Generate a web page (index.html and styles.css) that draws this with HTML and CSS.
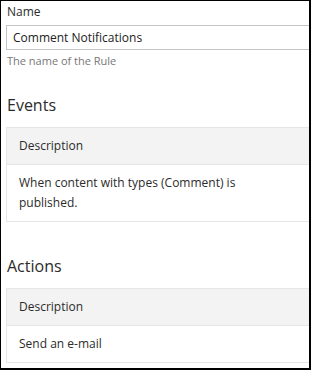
FILE: index.html
```html
<!doctype html>
<html>
  <head>
    <meta charset="utf-8">
    <title>Edit Rule</title>
    <link rel="stylesheet" href="styles.css">
  </head>

  <body>
    <div class="frame">
      <div class="page">

        <div class="field">
          <label class="field-label" for="ruleName">Name</label>
          <input class="text-box" id="ruleName" type="text" value="Comment Notifications">
          <span class="hint">The name of the Rule</span>
        </div>

        <h2>Events</h2>
        <table class="grid">
          <thead>
            <tr>
              <th class="col-desc">Description</th>
              <th></th>
            </tr>
          </thead>
          <tbody>
            <tr>
              <td class="col-desc">When content with types (Comment) is published.</td>
              <td></td>
            </tr>
          </tbody>
        </table>

        <h2>Actions</h2>
        <table class="grid">
          <thead>
            <tr>
              <th class="col-desc">Description</th>
              <th></th>
            </tr>
          </thead>
          <tbody>
            <tr>
              <td class="col-desc">Send an e-mail</td>
              <td></td>
            </tr>
          </tbody>
        </table>

      </div>
    </div>
  </body>
</html>
```

FILE: styles.css
```css
body {
  margin:0;
  font-family:"Open Sans", "Noto Sans", sans-serif;
  font-size:12px;
  color:#2b2b2b;
  background-color:#fff;
}

.frame {
  width:311px;
  height:370px;
  box-sizing:border-box;
  border:1px solid #000;
  border-right-width:2px;
  border-bottom-width:2px;
  overflow:hidden;
}

.page {
  width:440px;
  padding:1px 0 0 5px;
}

.field-label {
  display:block;
  line-height:20px;
  padding-left:1px;
}

.text-box {
  display:block;
  width:100%;
  height:25px;
  box-sizing:border-box;
  margin:3px 0 0;
  padding:0 6px;
  border:1px solid #c4c4c4;
  font-family:"Open Sans", "Noto Sans", sans-serif;
  font-size:12px;
  color:#222;
  background-color:#fff;
}

.hint {
  display:block;
  margin-top:3px;
  padding-left:1px;
  font-size:11px;
  line-height:16px;
  color:#777;
}

h2 {
  margin:24px 0 0;
  padding-left:1px;
  font-size:16px;
  font-weight:normal;
  line-height:24px;
  color:#2b2b2b;
}

.grid + h2 {
  margin-top:32px;
}

.grid {
  width:100%;
  margin-top:10px;
  border-collapse:collapse;
  border:1px solid #e6e6e6;
}

.grid th,
.grid td {
  padding:8px 12px;
  line-height:20px;
  text-align:left;
  font-weight:normal;
  border-top:1px solid #e6e6e6;
  vertical-align:top;
}

.grid th {
  background-color:#f3f3f3;
}

.grid .col-desc {
  width:250px;
}
```
